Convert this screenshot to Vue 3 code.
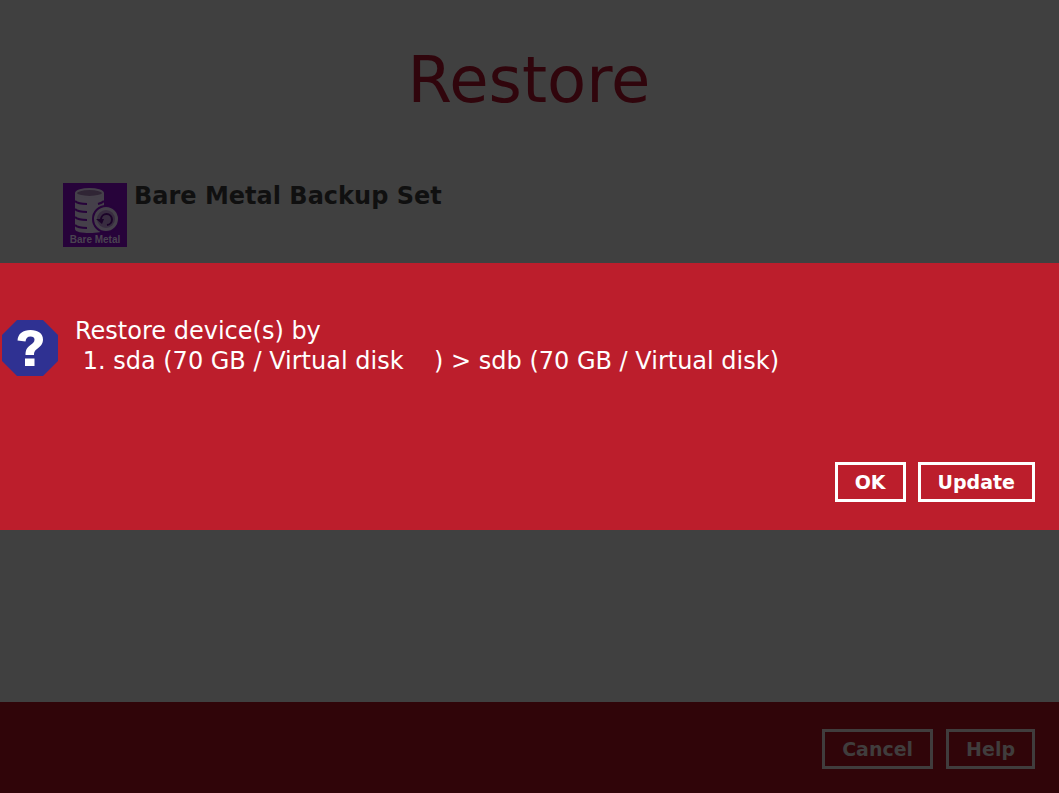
<script setup>
const devices = [
  { source: 'sda (70 GB / Virtual disk    )', target: 'sdb (70 GB / Virtual disk)' },
]
</script>

<template>
  <div class="screen">
    <main class="page">
      <h1 class="title">Restore</h1>
      <section class="backup-set">
        <svg class="set-icon" viewBox="0 0 64 64" role="img" aria-label="Bare Metal">
          <rect width="64" height="64" fill="#27033a" />
          <path d="M12 10v36c0 3 7 4 14.500 4s14.500-1 14.500-4V10z" fill="#45404a" />
          <ellipse cx="26.500" cy="10" rx="13.500" ry="4" fill="#302535" stroke="#45404a" stroke-width="2" />
          <path
            d="M12 18q3 3 12 3M12 26q3 3 12 3M12 34q3 3 12 3M12 42q3 3 12 3M41 18q-2 2-6 3"
            fill="none"
            stroke="#27033a"
            stroke-width="2"
          />
          <circle cx="43" cy="36" r="13" fill="#45404a" stroke="#27033a" stroke-width="2" />
          <circle cx="43" cy="36" r="9" fill="#382c40" />
          <path d="M38 36a5.500 5.500 0 1 1 6 6" fill="none" stroke="#1c0429" stroke-width="2" />
          <path d="M33 36l8 0-2 5z" fill="#1c0429" />
          <text x="32" y="60" text-anchor="middle" class="icon-label">Bare Metal</text>
        </svg>
        <h2 class="set-name">Bare Metal Backup Set</h2>
      </section>
    </main>

    <footer class="footer">
      <button type="button" class="button muted">Cancel</button>
      <button type="button" class="button muted">Help</button>
    </footer>

    <div class="overlay">
      <div class="dialog" role="dialog" aria-modal="true" aria-labelledby="dialog-text">
        <div class="message">
          <svg class="question" viewBox="0 0 56 56" aria-hidden="true">
            <path d="M15 0h26l15 15v26L41 56H15L0 41V15z" fill="#2f3192" />
            <path
              d="M15.500 20.500C16 13.500 21 10 28.500 10C36 10 41 13.500 41 19.500C41 24 38.500 26.500 35 29C32.500 31 32 32 32 35H23.500C23.500 30 25 27.500 28.500 25C31 23 32.500 22 32.500 19.500C32.500 17.500 31 16.500 28.500 16.500C25.500 16.500 24 18 23.500 21.500zM23 38.500H32.500V46H23z"
              fill="#ffffff"
            />
          </svg>
          <div id="dialog-text" class="dialog-text">
            <div>Restore device(s) by</div>
            <div v-for="(device, index) in devices" :key="index" class="device">
              {{ ` ${index + 1}. ${device.source} > ${device.target}` }}
            </div>
          </div>
        </div>
        <div class="actions">
          <button type="button" class="button">OK</button>
          <button type="button" class="button">Update</button>
        </div>
      </div>
    </div>
  </div>
</template>

<style>
html,
body {
  margin: 0;
  background: #404040;
}
</style>

<style scoped>
.screen {
  position: relative;
  display: flex;
  flex-direction: column;
  min-height: 100vh;
  background: #404040;
  font-family: "DejaVu Sans", sans-serif;
}
.page {
  flex: 1;
  padding: 42px 64px 0 63px;
}
.title {
  margin: 0;
  font-size: 64px;
  line-height: 76px;
  font-weight: 400;
  text-align: center;
  color: #30050c;
}
.backup-set {
  display: flex;
  align-items: flex-start;
  gap: 7px;
  margin-top: 65px;
}
.set-icon {
  flex: none;
  width: 64px;
  height: 64px;
}
.icon-label {
  font: bold 10px "Liberation Sans", sans-serif;
  fill: #4a4450;
}
.set-name {
  margin: 0;
  font-size: 24px;
  line-height: 26px;
  font-weight: 700;
  color: #101010;
}
.footer {
  display: flex;
  justify-content: flex-end;
  gap: 13px;
  padding: 27px 24px 24px;
  background: #300509;
}
.button {
  box-sizing: border-box;
  height: 40px;
  padding: 0 17px;
  border: 3px solid #ffffff;
  border-radius: 0;
  background: transparent;
  color: #ffffff;
  font-family: inherit;
  font-size: 19px;
  line-height: 24px;
  font-weight: 700;
}
.muted {
  border-color: #403d3d;
  color: #403d3d;
}
.overlay {
  position: absolute;
  inset: 0;
  display: flex;
  align-items: center;
}
.dialog {
  box-sizing: border-box;
  width: 100%;
  padding: 53px 24px 28px 2px;
  background: #bc1e2c;
  color: #ffffff;
}
.message {
  display: flex;
  align-items: flex-start;
  gap: 17px;
}
.question {
  flex: none;
  width: 56px;
  height: 56px;
  margin-top: 4px;
}
.dialog-text {
  font-size: 24px;
  line-height: 30px;
}
.device {
  white-space: pre-wrap;
}
.actions {
  display: flex;
  justify-content: flex-end;
  gap: 12px;
  margin-top: 86px;
}
</style>
